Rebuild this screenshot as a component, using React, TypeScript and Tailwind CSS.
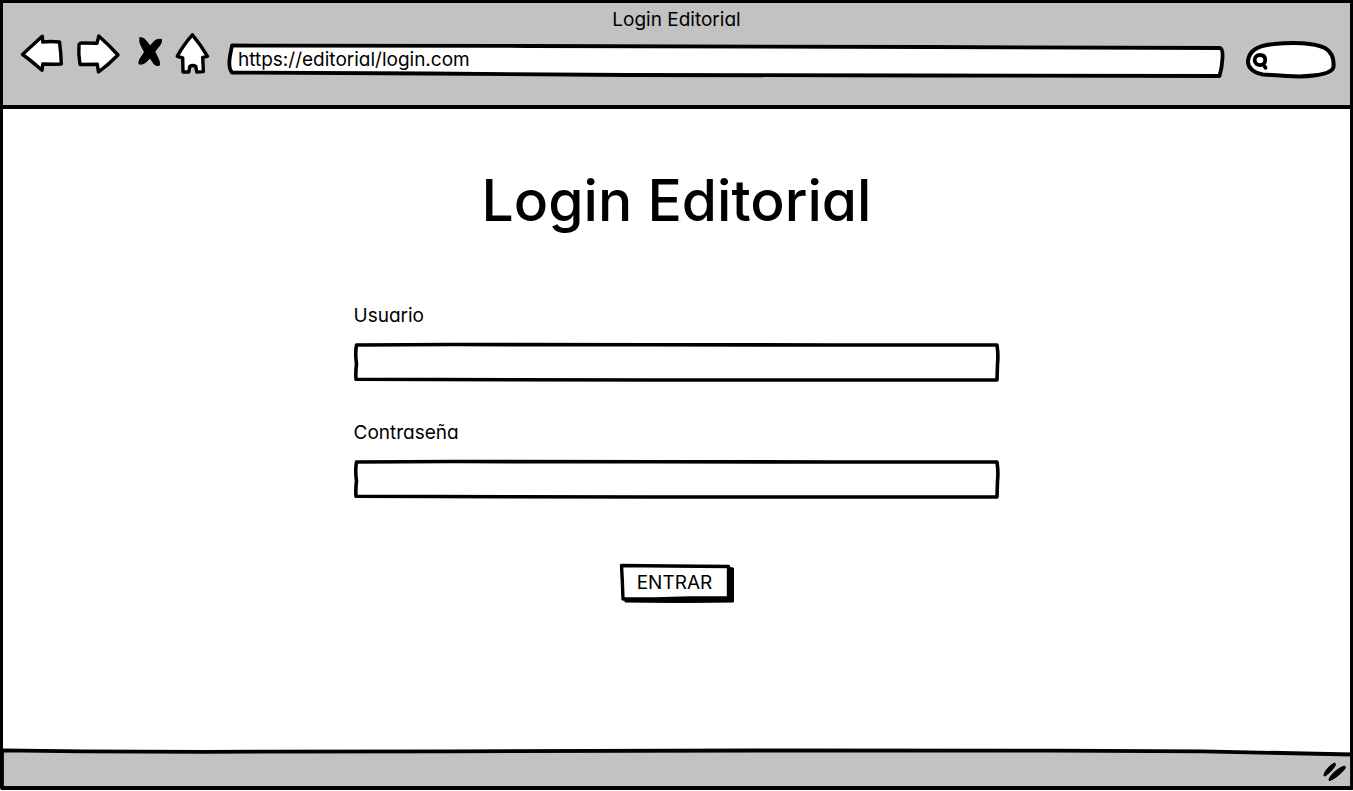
import type { ReactNode } from "react";

function NavButton({ label, width, children }: { label: string; width: number; children: ReactNode }) {
  return (
    <button type="button" aria-label={label} className="shrink-0 cursor-pointer">
      <svg
        width={width}
        height="42"
        viewBox={`0 0 ${width} 42`}
        className="block overflow-visible fill-white stroke-black stroke-[3.4]"
        strokeLinejoin="round"
        strokeLinecap="round"
      >
        {children}
      </svg>
    </button>
  );
}

function Sketch({ viewBox, d, className }: { viewBox: string; d: string; className: string }) {
  return (
    <svg
      aria-hidden="true"
      viewBox={viewBox}
      preserveAspectRatio="none"
      className={`pointer-events-none absolute inset-0 size-full overflow-visible stroke-black ${className}`}
      strokeLinejoin="round"
    >
      <path d={d} vectorEffect="non-scaling-stroke" />
    </svg>
  );
}

function Field({ id, label, type }: { id: string; label: string; type: string }) {
  return (
    <div className="flex flex-col gap-[15px]">
      <label htmlFor={id} className="self-start leading-6">
        {label}
      </label>
      <div className="relative h-[39px]">
        <Sketch
          viewBox="0 0 646 39"
          d="M2.5 2 L100 1.5 L300 1.8 L480 2 L643 2 Q644.5 12 643.5 21 L643 37 L470 37 L300 37 L160 36.8 L2 36.3 Q1.5 29 2.5 21 Q1 10 2.5 2 Z"
          className="fill-white stroke-[3.6]"
        />
        <input id={id} type={type} className="relative size-full bg-transparent px-3 outline-none" />
      </div>
    </div>
  );
}

export default function App() {
  return (
    <div className="flex min-h-screen flex-col bg-white pb-px font-[Inter,'Open_Sans',sans-serif] text-[19px] text-black [font-feature-settings:'cv11']">
      <div className="flex grow flex-col rounded-b-sm border-[3px] border-black">
        <header className="border-b-4 border-black bg-[#c2c2c2] pb-[26px]">
          <p className="h-[30px] text-center leading-[34px]">Login Editorial</p>
          <div className="flex items-start gap-3 pr-3.5 pl-[17px]">
            <NavButton label="Atrás" width={44}>
              <path d="M2.5 21.5 C8 16 15 10 22.3 3.2 L22.8 9 Q31 8 39.5 9 Q41 20 41.3 31 L33 31.3 L22.8 31 L22 37.3 C16 32 9 26 2.5 21.5 Z" />
            </NavButton>
            <NavButton label="Adelante" width={44}>
              <path d="M3 11.5 Q4 10 6 10 L21 10.3 L22.8 3 Q33 12 42 22 Q32 32 22.5 39 L21.3 31.3 L4 31.5 Q2.2 21 3 11.5 Z" />
            </NavButton>
            <NavButton label="Detener" width={30}>
              <path
                d="M8 4.8 Q11 4.4 13 6.5 L18.2 13 L22.5 8 Q25 5.6 29.5 6.4 Q29.8 9 28.5 11.2 L22.8 18.7 L26.8 27 Q28 30 27.3 32.3 Q24.5 33 22.5 31.5 L18 25 L13.5 29.5 Q10.5 31.8 7 31 Q6.5 28.5 8 26 L12.5 19 L8.7 11.8 Q7 8 8 4.8 Z"
                className="fill-black stroke-1"
              />
            </NavButton>
            <NavButton label="Inicio" width={42}>
              <path d="M18.4 1.8 Q27 12 33.5 23.3 L28.7 24.3 L29.4 38.6 L22.7 39 L21.8 33.5 Q18.8 31.5 15.8 33.5 L14.8 39 L9 39 L8.7 24.8 L3.2 23.3 Q10 11 18.4 1.8 Z" />
            </NavButton>
            <div className="relative mt-[11px] h-[33px] min-w-0 grow">
              <Sketch
                viewBox="0 0 996 33"
                d="M4 1.5 L300 2 L700 3 L992 4 Q995 5 994.5 14 Q994 24 991.5 32 L700 31.5 L400 31 L200 29.5 L4 28.5 Q0 24 2 12 Z"
                className="fill-white stroke-[3.8]"
              />
              <input
                type="text"
                aria-label="Dirección"
                defaultValue="https://editorial/login.com"
                className="relative block h-[31px] w-full bg-transparent px-2.5 outline-none"
              />
            </div>
            <div className="relative mt-2 ml-2.5 h-[38px] w-[90px] shrink-0">
              <Sketch
                viewBox="0 0 90 38"
                d="M2 20 C3 9 14 4 28 3 C46 1 68 1.5 79 7 C86 11 88 19 87.5 26 C86 33 70 35 53 35.5 C38 35 26 34 17 33.5 C8 32 1.5 27 2 20 Z"
                className="fill-white stroke-4"
              />
              <svg
                aria-hidden="true"
                viewBox="0 0 18 18"
                className="absolute top-3 left-1.5 size-[18px] fill-none stroke-black stroke-[3.8]"
                strokeLinecap="round"
              >
                <path d="M8 2 C4.5 2 2.6 4.2 2.6 7.2 C2.8 10.5 5.5 12.3 8.5 12 C12 11.6 13.4 9.5 13.2 6.5 C13 3.5 11 2 8 2 Z M11.8 12 L13.5 14.8" />
              </svg>
              <input type="search" aria-label="Buscar" className="relative size-full bg-transparent pr-2 pl-6 outline-none" />
            </div>
          </div>
        </header>

        <main className="flex grow flex-col items-center px-6 pt-14 pb-16">
          <h1 className="text-center text-[57px] leading-[72px] font-medium">Login Editorial</h1>
          <form className="mt-[67px] flex w-full max-w-[646px] flex-col" onSubmit={(event) => event.preventDefault()}>
            <div className="flex flex-col gap-[39px]">
              <Field id="usuario" label="Usuario" type="text" />
              <Field id="contrasena" label="Contraseña" type="password" />
            </div>
            <button type="submit" className="relative mt-[65px] h-[39px] w-[114px] cursor-pointer self-center pr-1">
              <Sketch
                viewBox="0 0 114 39"
                d="M5 34 L109 33 L109 3.5 L113.5 4 L113.5 38 L60 38.5 L5 38 Z"
                className="fill-black stroke-1"
              />
              <Sketch
                viewBox="0 0 114 39"
                d="M1.5 1.5 L50 2 L108.5 2.5 L108.5 34 L70 34 L35 35 L3 35 Q2.5 18 1.5 1.5 Z"
                className="fill-white stroke-[3.4]"
              />
              <span className="relative">ENTRAR</span>
            </button>
          </form>
        </main>

        <footer className="relative flex h-[38px] items-center justify-end pt-1 pr-1">
          <Sketch
            viewBox="0 0 1347 38"
            d="M-1 1.3 L80 2.3 L200 2.8 L450 2.3 L750 1.5 L1050 1.7 L1200 2.3 L1349 5.5 L1349 39 L-1 39 Z"
            className="fill-[#c2c2c2] stroke-[3.8]"
          />
          <svg
            aria-hidden="true"
            viewBox="0 0 24 20"
            className="relative h-5 w-6 overflow-visible fill-black stroke-black stroke-1"
            strokeLinejoin="round"
          >
            <path d="M2 15.5 C2 11.5 7.5 5.5 12.5 3 Q14 3.3 13.3 5.5 C11 9.5 6.5 14 3 16 Q2 16.3 2 15.5 Z" />
            <path d="M7 19.5 C8.5 14.5 16 8 22.5 6 Q24 6.5 23 8.5 C19.5 13 13.5 18.5 8 20.5 Q6.8 20.8 7 19.5 Z" />
          </svg>
        </footer>
      </div>
    </div>
  );
}
